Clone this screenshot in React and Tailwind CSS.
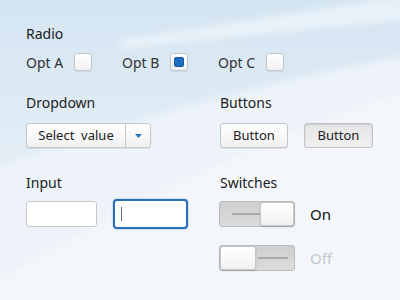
import React from 'react';

const font = { fontFamily: '"Noto Sans", "Open Sans", sans-serif' };

function Check({ checked }) {
  return (
    <div className="w-[18px] h-[18px] rounded-[3px] border border-[#c4c8cc] bg-gradient-to-b from-white to-[#f1f1f1] shadow-[0_1px_1px_rgba(0,0,0,0.08)] flex items-center justify-center">
      {checked && <div className="w-[10px] h-[10px] rounded-[2px] bg-[#1f6fc0] border border-[#175a9e]" />}
    </div>
  );
}

function Radio({ label, checked }) {
  return (
    <div className="w-[96px] flex items-center">
      <span className="w-[48px] text-[14px] text-[#333]">{label}</span>
      <Check checked={checked} />
    </div>
  );
}

function Switch({ on }) {
  return (
    <div className="relative w-[76px] h-[26px] rounded-[3px] border border-[#b8bbbe] bg-gradient-to-b from-[#cfcfcf] to-[#dcdcdc] flex items-center">
      {on ? (
        <>
          <div className="ml-[12px] w-[30px] h-[2px] bg-[#a9a9a9]" />
          <div className="ml-auto h-full w-[36px] rounded-[3px] border border-[#c8c8c8] bg-gradient-to-b from-white to-[#f1f1f1] shadow-[0_1px_2px_rgba(0,0,0,0.15)]" />
        </>
      ) : (
        <>
          <div className="h-full w-[36px] rounded-[3px] border border-[#c8c8c8] bg-gradient-to-b from-white to-[#f1f1f1] shadow-[0_1px_2px_rgba(0,0,0,0.15)]" />
          <div className="ml-[2px] w-[30px] h-[2px] bg-[#a9a9a9]" />
        </>
      )}
    </div>
  );
}

export default function App() {
  return (
    <div className="relative w-[400px] h-[300px] overflow-hidden bg-gradient-to-b from-[#d4e5f2] via-[#e2edf6] to-[#ecf2f8]" style={font}>
      <svg className="absolute inset-0" width="400" height="300" viewBox="0 0 400 300">
        <defs>
          <filter id="soft" x="-10%" y="-10%" width="120%" height="120%">
            <feGaussianBlur stdDeviation="3" />
          </filter>
        </defs>
        <path d="M-10 170 C110 125 250 85 410 55 L410 310 L-10 310 Z" fill="#edf3f9" filter="url(#soft)" />
        <path d="M-10 285 C100 220 230 150 410 90 L410 310 L-10 310 Z" fill="#f3f7fb" filter="url(#soft)" />
        <path d="M120 40 C220 25 310 10 410 -5 L410 20 C300 30 210 40 120 48 Z" fill="#ffffff" opacity="0.45" filter="url(#soft)" />
      </svg>

      <div className="relative pl-[26px] pt-[25px] text-[#222]">
        <div className="text-[14px] leading-[18px]">Radio</div>
        <div className="mt-[10px] flex h-[18px]">
          <Radio label="Opt A" />
          <Radio label="Opt B" checked />
          <Radio label="Opt C" />
        </div>

        <div className="mt-[23px] flex">
          <div className="w-[194px]">
            <div className="text-[14px] leading-[18px]">Dropdown</div>
            <div className="mt-[11px] flex w-[125px] h-[25px] rounded-[3px] border border-[#c4c6c8] bg-gradient-to-b from-white to-[#f0f0f0] shadow-[0_1px_1px_rgba(0,0,0,0.08)]">
              <div className="w-[98px] flex items-center justify-center text-[13px] text-[#222]">Select&nbsp; value</div>
              <div className="flex-1 border-l border-[#c4c6c8] flex items-center justify-center">
                <svg width="7" height="4" viewBox="0 0 7 4"><path d="M0 0 L7 0 L3.5 4 Z" fill="#2a74c0" /></svg>
              </div>
            </div>
          </div>
          <div>
            <div className="text-[14px] leading-[18px]">Buttons</div>
            <div className="mt-[11px] flex gap-[16px]">
              <div className="w-[68px] h-[25px] rounded-[3px] border border-[#c4c6c8] bg-gradient-to-b from-white to-[#f0f0f0] shadow-[0_1px_1px_rgba(0,0,0,0.08)] flex items-center justify-center text-[13px]">Button</div>
              <div className="w-[69px] h-[25px] rounded-[3px] border border-[#c0c2c4] bg-gradient-to-b from-[#e6e6e6] to-[#efefef] shadow-[inset_0_1px_2px_rgba(0,0,0,0.12)] flex items-center justify-center text-[13px]">Button</div>
            </div>
          </div>
        </div>

        <div className="mt-[26px] flex">
          <div className="w-[194px]">
            <div className="text-[14px] leading-[18px]">Input</div>
            <div className="mt-[7px] flex items-center gap-[16px]">
              <div className="w-[71px] h-[26px] rounded-[3px] border border-[#c6c8ca] bg-white" />
              <div className="w-[75px] h-[30px] rounded-[4px] border-2 border-[#2a6fb8] bg-white shadow-[0_0_2px_rgba(32,102,176,0.5)] flex items-center pl-[6px]">
                <div className="w-[1px] h-[14px] bg-[#666]" />
              </div>
            </div>
          </div>
          <div>
            <div className="text-[14px] leading-[18px]">Switches</div>
            <div className="mt-[9px] -ml-[1px] flex items-center">
              <Switch on />
              <span className="ml-[15px] text-[15px] text-[#111]">On</span>
            </div>
            <div className="mt-[18px] -ml-[1px] flex items-center">
              <Switch />
              <span className="ml-[15px] text-[15px] text-[#c3c7cb]">Off</span>
            </div>
          </div>
        </div>
      </div>
    </div>
  );
}
